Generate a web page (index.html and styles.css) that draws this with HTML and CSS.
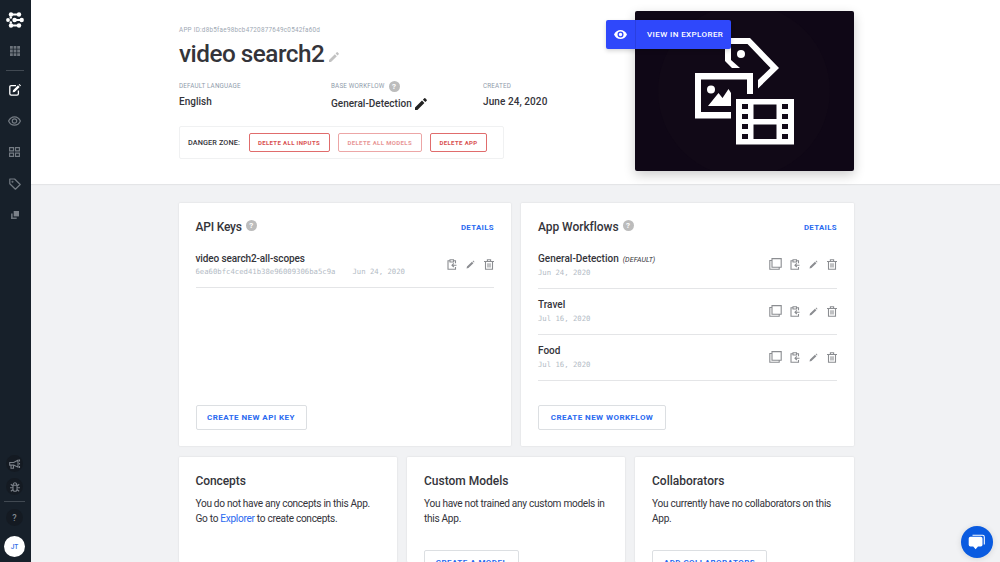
FILE: index.html
```html
<!DOCTYPE html>
<html lang="en">
<head>
<meta charset="utf-8">
<title>video search2</title>
<link rel="stylesheet" href="styles.css">
</head>
<body>
<svg class="defs" width="0" height="0">
  <defs>
    <symbol id="pencil" viewBox="0 0 12 12"><path d="M0 9.6V12h2.4l7-7L7 2.600zM11.700 2.700a.8.8 0 0 0 0-1L10.300.3a.8.8 0 0 0-1 0L7.900 1.700l2.400 2.400z"/></symbol>
    <symbol id="thin-pencil" viewBox="0 0 10 10"><path d="M.6 9.400l.5-2.100 5.500-5.400 1.600 1.600-5.500 5.500zM7.300 1.300l.7-.7 1.500 1.500-.7.7z"/></symbol>
    <symbol id="clip" viewBox="0 0 10 11"><path d="M3 1.800H1v8.400h7.500V8M6.500 1.800h2v2.400M3 .7h3.500v2.300H3zM9.500 6.200H5M6.800 4.400L5 6.200 6.800 8" fill="none" stroke="currentColor" stroke-width="1.100"/></symbol>
    <symbol id="trash" viewBox="0 0 10 11"><path d="M0 2.500h10M3.400 2.300V.8h3.200v1.500M1.500 2.500v7.800h7V2.500M4 4.300v4.300M6 4.300v4.300" fill="none" stroke="currentColor" stroke-width="1.100"/></symbol>
    <symbol id="copy" viewBox="0 0 13 12"><path d="M3 .6h9.200v8.600H3zM3 2.500H.8v8.800h9.400V9.200" fill="none" stroke="currentColor" stroke-width="1.100"/></symbol>
  </defs>
</svg>
<div class="app">
  <nav class="sidebar">
    <svg class="logo" viewBox="0 0 18 16"><g fill="#fff" stroke="#fff"><path d="M5 2.500h8M9 8h7M5 13.500h8" stroke-width="2.200"/><g stroke="none"><circle cx="5" cy="2.500" r="2.200"/><circle cx="13" cy="2.500" r="2.200"/><circle cx="2" cy="8" r="1.900"/><circle cx="8.600" cy="8" r="2.300"/><circle cx="15.700" cy="8" r="2.200"/><circle cx="5" cy="13.500" r="2.200"/><circle cx="13" cy="13.500" r="2.200"/><circle cx="4.800" cy="5.500" r="1.200"/><circle cx="4.800" cy="10.500" r="1.200"/></g></g></svg>
    <svg class="ico apps" viewBox="0 0 10 10" fill="#6c737b"><path d="M0 0h2.800v2.800H0zM3.600 0h2.800v2.800H3.600zM7.200 0H10v2.800H7.200zM0 3.600h2.800v2.800H0zM3.600 3.600h2.800v2.800H3.600zM7.200 3.600H10v2.800H7.200zM0 7.200h2.800V10H0zM3.600 7.200h2.800V10H3.600zM7.200 7.200H10V10H7.200z"/></svg>
    <hr class="rule">
    <svg class="ico edit" viewBox="0 0 12 12"><path d="M7 1.700H2.200Q.8 1.700.8 3v6.800q0 1.400 1.400 1.400H8q1.400 0 1.400-1.400V6.500" fill="none" stroke="#fff" stroke-width="1.300"/><path d="M3.700 8.300l.3-2L9 1.300l1.700 1.700-5 5zM9.700.7l.7-.7L12 1.600l-.7.7z" fill="#fff"/></svg>
    <svg class="ico eye" viewBox="0 0 13 10" fill="none" stroke="#747b83" stroke-width="1.200"><path d="M.6 5C3.200-.6 9.800-.6 12.400 5 9.800 10.600 3.200 10.600.6 5z"/><circle cx="6.500" cy="5" r="2.200"/></svg>
    <svg class="ico grid" viewBox="0 0 11 10" fill="none" stroke="#747b83" stroke-width="1.150"><path d="M.6.6h3.900v3.300H.6zM6.500.6h3.900v3.300H6.500zM.6 6.100h3.900v3.300H.6zM6.500 6.100h3.900v3.300H6.500z"/></svg>
    <svg class="ico tag" viewBox="0 0 12 12" fill="none" stroke="#747b83" stroke-width="1.200"><path d="M.8 1v4.700l5.600 5.500 4.800-4.700L5.600 1z" stroke-linejoin="round"/><circle cx="3.500" cy="3.700" r=".4"/></svg>
    <svg class="ico layers" viewBox="0 0 8 8"><path d="M2.700 0H8v5.400H2.700z" fill="#7b8189"/><path d="M0 2.500h1.700v4h4V8H0z" fill="#6c737b"/></svg>
    <div class="bottom">
      <span class="disc"><svg class="horn" viewBox="0 0 12 10" fill="none" stroke="#7b8189" stroke-width="1.100"><path d="M.7 3.500h4L9 1.200v7L4.700 6.100h-4zM2 6.200v3h2.500V6.500M10.500.5v2M10.500 4v1.500M10.500 7v2"/></svg></span>
      <span class="disc"><svg class="bug" viewBox="0 0 10 10" fill="none" stroke="#7b8189" stroke-width="1.100"><path d="M3 3.200h4v4Q7 9.300 5 9.300T3 7.200zM3.300 3Q3.300.7 5 .7T6.700 3M0 5.700h3M7 5.700h3M.8 2.200L3 4M9.200 2.200L7 4M.8 9.200L3 7.500M9.200 9.200L7 7.500"/></svg></span>
      <hr class="rule">
      <span class="disc help">?</span>
      <span class="avatar">JT</span>
    </div>
  </nav>
  <main class="main">
    <header class="hero">
      <div class="hero-in">
        <div class="info">
          <div class="appid"><span class="t-id">APP ID:d8b5fae98bcb4720877649c0542fa60d</span></div>
          <h1 class="title"><span>video search2</span><svg class="title-pen"><use href="#pencil"/></svg></h1>
          <div class="facts">
            <div class="fact"><div class="label">DEFAULT LANGUAGE</div><div class="value">English</div></div>
            <div class="fact"><div class="label">BASE WORKFLOW<span class="q">?</span></div><div class="value low">General-Detection<svg class="val-pen"><use href="#pencil"/></svg></div></div>
            <div class="fact"><div class="label">CREATED</div><div class="value date">June 24, 2020</div></div>
          </div>
          <div class="danger"><span class="dz">DANGER ZONE:</span><button class="del d1">DELETE ALL INPUTS</button><button class="del d2 off">DELETE ALL MODELS</button><button class="del d3">DELETE APP</button></div>
        </div>
        <div class="cover">
          <svg class="art" viewBox="635 11 219 160">
            <circle cx="744" cy="91" r="86" fill="#110917"/>
            <path d="M725 38h25l29 30-21 20.500V80l12.500-12L747.500 44H731v16l9 8h-8l-7-7z" fill="#fff"/>
            <circle cx="741" cy="54" r="4" fill="#fff"/>
            <path d="M695 73h58v21h-6V79.500h-46V112h30v6.500h-36z" fill="#fff"/>
            <circle cx="711" cy="89.500" r="4" fill="#fff"/>
            <path d="M708 106l10.500-13 4 5 6-9 2.500 4v13z" fill="#fff"/>
            <path fill-rule="evenodd" fill="#fff" d="M736 99h58v45.500h-58zM742 104v5h6v-5zM742 114v5h6v-5zM742 124v5h6v-5zM742 134v5h6v-5zM782 104v5h6v-5zM782 114v5h6v-5zM782 124v5h6v-5zM782 134v5h6v-5zM753.500 104.500v14.500h23v-14.500zM753.500 124.500V139h23v-14.500z"/>
          </svg>
          <a class="view"><span class="view-eye"><svg viewBox="0 0 13 9"><path fill="#fff" fill-rule="evenodd" d="M0 4.500C2.500-1.500 10.500-1.500 13 4.500 10.500 10.500 2.500 10.500 0 4.500zM6.500 1.500a3 3 0 1 0 0 6 3 3 0 0 0 0-6zm0 1.300a1.700 1.700 0 1 1 0 3.400 1.700 1.700 0 0 1 0-3.400z"/></svg></span><span class="view-text">VIEW IN EXPLORER</span></a>
        </div>
      </div>
    </header>
    <section class="content">
      <div class="row two">
        <article class="card tall keycard">
          <div class="head"><h2><span class="h-api">API Keys</span><span class="q">?</span></h2><a class="details">DETAILS</a></div>
          <ul class="list keys">
            <li class="item"><div><div class="name n-key">video search2-all-scopes</div><div class="mono"><span>6ea60bfc4ced41b38e96009306ba5c9a</span><span>Jun 24, 2020</span></div></div>
              <div class="acts"><svg class="a-clip"><use href="#clip"/></svg><svg class="a-pen"><use href="#thin-pencil"/></svg><svg class="a-trash"><use href="#trash"/></svg></div></li>
          </ul>
          <button class="btn b1">CREATE NEW API KEY</button>
        </article>
        <article class="card tall">
          <div class="head"><h2><span class="h-flow">App Workflows</span><span class="q">?</span></h2><a class="details">DETAILS</a></div>
          <ul class="list">
            <li class="item first"><div><div class="name">General-Detection<em>(DEFAULT)</em></div><div class="mono">Jun 24, 2020</div></div>
              <div class="acts"><svg class="a-copy"><use href="#copy"/></svg><svg class="a-clip"><use href="#clip"/></svg><svg class="a-pen"><use href="#thin-pencil"/></svg><svg class="a-trash"><use href="#trash"/></svg></div></li>
            <li class="item"><div><div class="name">Travel</div><div class="mono">Jul 16, 2020</div></div>
              <div class="acts"><svg class="a-copy"><use href="#copy"/></svg><svg class="a-clip"><use href="#clip"/></svg><svg class="a-pen"><use href="#thin-pencil"/></svg><svg class="a-trash"><use href="#trash"/></svg></div></li>
            <li class="item"><div><div class="name">Food</div><div class="mono">Jul 16, 2020</div></div>
              <div class="acts"><svg class="a-copy"><use href="#copy"/></svg><svg class="a-clip"><use href="#clip"/></svg><svg class="a-pen"><use href="#thin-pencil"/></svg><svg class="a-trash"><use href="#trash"/></svg></div></li>
          </ul>
          <button class="btn b2">CREATE NEW WORKFLOW</button>
        </article>
      </div>
      <div class="row three">
        <article class="card small keycard"><h2 class="h-con">Concepts</h2><p class="p1">You do not have any concepts in this App.<br>Go to <a>Explorer</a> to create concepts.</p></article>
        <article class="card small"><h2 class="h-mod">Custom Models</h2><p class="p2">You have not trained any custom models in<br>this App.</p><button class="btn b3">CREATE A MODEL</button></article>
        <article class="card small"><h2 class="h-col">Collaborators</h2><p class="p3">You currently have no collaborators on this<br>App.</p><button class="btn b4">ADD COLLABORATORS</button></article>
      </div>
    </section>
  </main>
  <button class="chat"><svg viewBox="0 0 18 16"><path d="M4.500 1.300h10.200q1.600 0 1.600 1.600v7.600" fill="none" stroke="#fff" stroke-width="1.100"/><path d="M2.400 2.800h10.400q1.700 0 1.700 1.700v6.300q0 1.700-1.700 1.700H10L7.600 15.300 5.200 12.500H2.400q-1.700 0-1.700-1.700V4.500q0-1.700 1.700-1.700z" fill="#fff"/></svg></button>
</div>
</body>
</html>
```

FILE: styles.css
```css
* { box-sizing: border-box; }
html, body { margin: 0; height: 562px; overflow: hidden; }
body { font-family: Roboto, "Liberation Sans", sans-serif; color: #34343a; background: #f1f2f4; }
h1, h2, p, ul, hr { margin: 0; padding: 0; }
ul { list-style: none; }
button { font-family: inherit; padding: 0; margin: 0; }
svg { display: block; flex: none; }
.defs { position: absolute; }
.app { display: flex; height: 562px; overflow: hidden; }

.sidebar { width: 31px; flex: none; background: #17202a; display: flex; flex-direction: column; align-items: center; padding: 12px 2px 5px 0; }
.logo { width: 18px; height: 16px; }
.ico { flex: none; }
.apps { width: 10px; height: 10px; margin-top: 18px; }
.rule { width: 18px; height: 1px; border: 0; background: #414952; margin-top: 14px; flex: none; }
.edit { width: 12px; height: 12px; margin-top: 13px; }
.eye { width: 13px; height: 10px; margin-top: 20px; }
.grid { width: 11px; height: 10px; margin-top: 21px; }
.tag { width: 12px; height: 12px; margin-top: 21px; }
.layers { width: 8px; height: 8px; margin-top: 21px; }
.bottom { margin-top: auto; display: flex; flex-direction: column; align-items: center; }
.disc { width: 17px; height: 17px; border-radius: 50%; background: #141a22; display: flex; align-items: center; justify-content: center; }
.disc + .disc { margin-top: 6px; }
.horn { width: 12px; height: 10px; }
.bug { width: 10px; height: 10px; }
.bottom .rule { width: 21px; margin: 6px 0 7px; }
.help { font-size: 9px; font-weight: 500; color: #858b92; }
.avatar { width: 21px; height: 21px; margin-top: 10px; border-radius: 50%; background: #fff; color: #356fe8; font-size: 6.5px; font-weight: 500; display: flex; align-items: center; justify-content: center; }

.main { flex: 1; min-width: 0; }
.hero { height: 184px; background: #fff; box-shadow: 0 1px 1px rgba(0,0,0,.05); padding-left: 148px; }
.hero-in { width: 675px; display: flex; justify-content: space-between; }
.info { width: 440px; padding-top: 24px; }
.appid { height: 12px; line-height: 12px; font-size: 6.3px; color: #9ea8b3; }
.t-id { letter-spacing: .27px; }
.title { height: 30px; margin-top: 3px; line-height: 30px; font-size: 24.3px; font-weight: 500; letter-spacing: -.5px; display: flex; align-items: center; white-space: nowrap; }
.title-pen { width: 10px; height: 10px; margin: 5px 0 0 5px; fill: #c2c2c2; }
.facts { display: grid; grid-template-columns: 152px 152px 1fr; margin-top: 11px; }
.label { height: 12px; line-height: 12px; font-size: 6.3px; color: #8f9bab; letter-spacing: .18px; display: flex; align-items: center; white-space: nowrap; }
.q { width: 11px; height: 11px; margin-left: 4px; border-radius: 50%; background: #bcbcbc; color: #fff; font-size: 8px; font-weight: 700; line-height: 11px; display: inline-flex; align-items: center; justify-content: center; letter-spacing: 0; }
.value { height: 12px; line-height: 12px; margin-top: 4px; font-size: 10px; font-weight: 500; display: flex; align-items: center; white-space: nowrap; }
.date { letter-spacing: .08px; }
.low { margin-top: 6px; }
.val-pen { width: 12px; height: 12px; margin-left: 3px; fill: #222; }
.danger { width: 325px; height: 33px; margin-top: 16px; border: 1px solid #f0f1f2; border-radius: 2px; display: flex; align-items: center; padding-left: 8px; }
.dz { width: 60.5px; font-size: 7.3px; font-weight: 500; letter-spacing: .1px; white-space: nowrap; }
.del { height: 19px; background: #fff; border: 1px solid #e06c6c; border-radius: 2px; color: #d95050; font-size: 6px; font-weight: 700; letter-spacing: .38px; white-space: nowrap; }
.d1 { width: 81px; }
.d2 { width: 84.500px; margin-left: 8px; }
.d3 { width: 57px; margin-left: 8px; }
.off { opacity: .6; }
.cover { width: 219px; height: 160px; margin-top: 11px; position: relative; background: #0f0716; border-radius: 2px; box-shadow: 0 4px 12px rgba(0,0,0,.2); }
.art { width: 219px; height: 160px; }
.view { position: absolute; left: -29px; top: 9px; width: 125px; height: 29px; display: flex; background: #2f48fb; border-radius: 2px; color: #fff; font-size: 8px; font-weight: 500; letter-spacing: .41px; box-shadow: 0 2px 4px rgba(0,0,0,.16); }
.view-eye { width: 30px; display: flex; align-items: center; justify-content: center; border-right: 1px solid #2a3fe0; }
.view-eye svg { width: 13px; height: 9px; }
.view-text { padding-left: 11px; line-height: 30px; white-space: nowrap; }

.content { width: 675px; margin: 19px 0 0 148px; }
.row { display: grid; gap: 10px; }
.two { grid-template-columns: 332px 333px; }
.three { grid-template-columns: 218px 218px 219px; margin-top: 11px; }
.card { background: #fff; border-radius: 1px; box-shadow: 0 0 2px rgba(0,0,0,.12); padding: 0 17px; }
.card.keycard { padding-left: 16.5px; }
.tall { height: 243px; display: flex; flex-direction: column; align-items: stretch; padding-bottom: 16px; }
.head { display: flex; justify-content: space-between; padding-top: 16px; height: 32px; }
h2 { font-size: 12px; line-height: 16px; font-weight: 500; display: flex; white-space: nowrap; }
h2 .q { margin-top: 1px; }
.h-api { letter-spacing: -.2px; }
.h-flow { letter-spacing: -.05px; }
.h-con { letter-spacing: -.08px; }
.details { font-size: 7.8px; font-weight: 700; letter-spacing: .37px; line-height: 18px; color: #2a6af0; }
.list { padding-top: 14px; }
.item { height: 46px; display: flex; justify-content: space-between; border-bottom: 1px solid #e4e5e7; padding-top: 9px; }
.keys .item, .item.first { height: 40px; padding-top: 3px; }
.keys .item { height: 39px; }
.name { height: 13px; line-height: 13px; font-size: 10px; font-weight: 500; white-space: nowrap; }
.n-key { letter-spacing: -.11px; }
.name em { font-size: 7.1px; font-weight: 400; margin-left: 4px; letter-spacing: .05px; }
.mono { margin-top: 2px; height: 12px; line-height: 12px; font-family: "DejaVu Sans Mono", monospace; font-size: 7.27px; color: #b3bbc5; display: flex; gap: 17px; white-space: nowrap; }
.keys .mono { margin-top: 1px; }
.acts { display: flex; align-items: center; height: 12px; margin-top: 6px; color: #8b8d91; fill: #8b8d91; }
.item:not(.first) .acts { margin-top: 7px; }
.keys .item .acts { margin-top: 6px; }
.a-copy { width: 13px; height: 12px; margin-right: 8px; }
.a-clip { width: 10px; height: 11px; margin-right: 9px; }
.a-pen { width: 9px; height: 9px; margin-right: 9px; }
.a-trash { width: 10px; height: 11px; }
.btn { height: 25px; background: #fff; border: 1px solid #dcdfe2; border-radius: 2px; color: #2a6af0; font-size: 8px; font-weight: 700; letter-spacing: .45px; white-space: nowrap; }
.tall .btn { margin-top: auto; align-self: flex-start; }
.b1 { width: 111px; }
.b2 { width: 128px; }
.b3 { width: 95px; }
.b4 { width: 115px; }
.small { height: 105px; padding-top: 16px; }
.small p { margin: 8px 0 24px; font-size: 10.1px; line-height: 14.5px; letter-spacing: -.3px; white-space: nowrap; }
.small .p2 { letter-spacing: -.29px; }
.small .p3 { letter-spacing: -.27px; }
.small a { color: #2a6af0; }
.chat { position: absolute; left: 961px; top: 526px; width: 32px; height: 32px; border: 0; border-radius: 50%; background: #0a5be0; display: flex; align-items: center; justify-content: center; box-shadow: 0 1px 6px rgba(0,0,0,.12); }
.chat svg { width: 18px; height: 16px; }
```
